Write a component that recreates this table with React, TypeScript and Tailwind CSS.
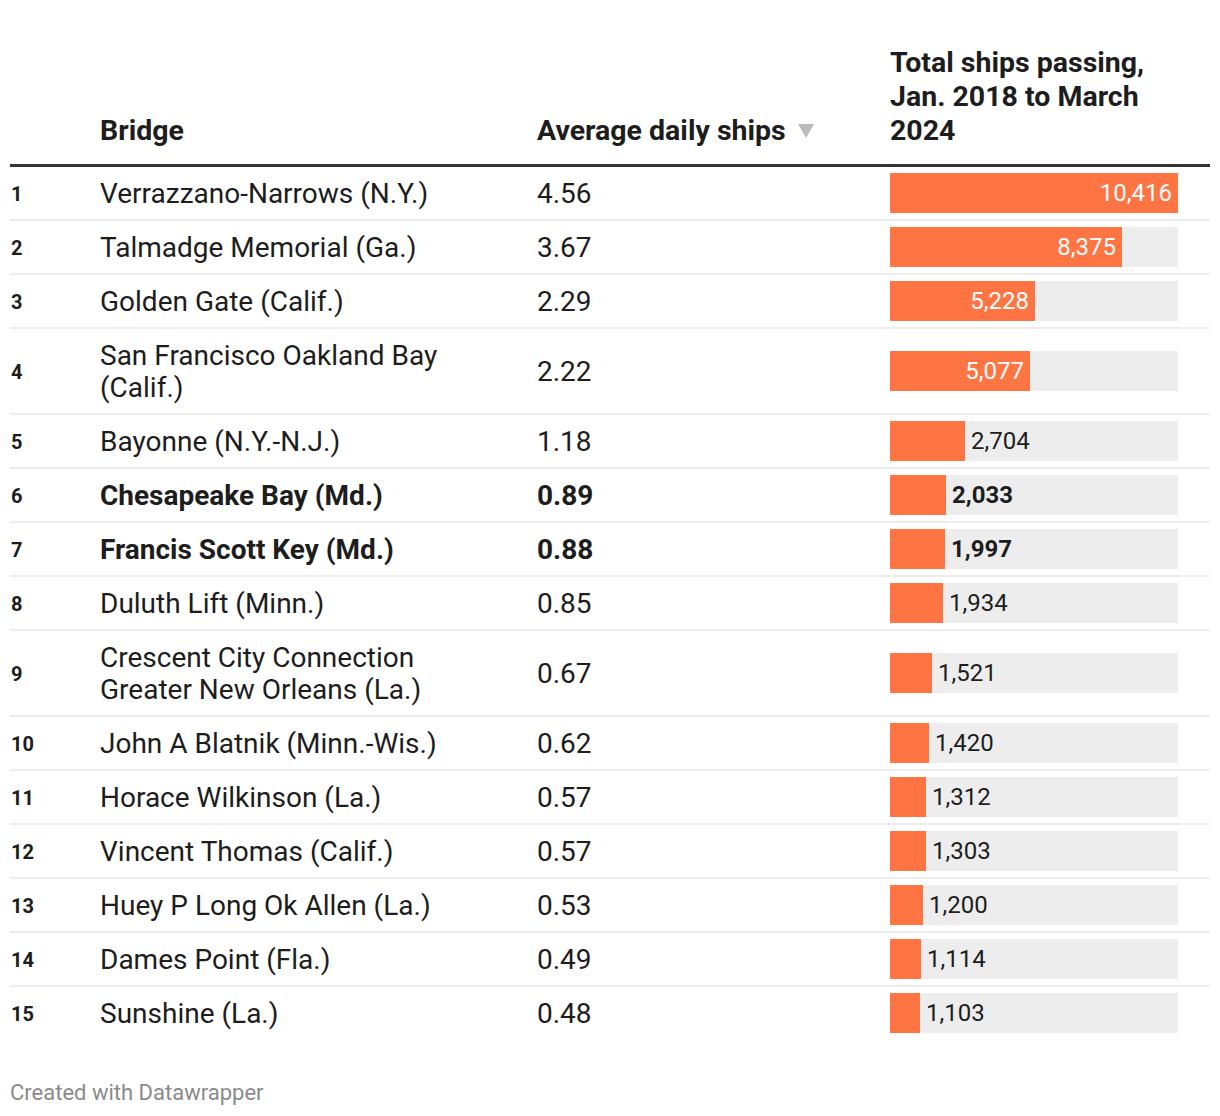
import React from "react";

// rows of the ship table
interface Row {
  rank: number;
  name: string;
  avg: string;
  total: number;
  bold?: boolean;
}

const rows: Row[] = [
  { rank: 1, name: "Verrazzano-Narrows (N.Y.)", avg: "4.56", total: 10416 },
  { rank: 2, name: "Talmadge Memorial (Ga.)", avg: "3.67", total: 8375 },
  { rank: 3, name: "Golden Gate (Calif.)", avg: "2.29", total: 5228 },
  { rank: 4, name: "San Francisco Oakland Bay (Calif.)", avg: "2.22", total: 5077 },
  { rank: 5, name: "Bayonne (N.Y.-N.J.)", avg: "1.18", total: 2704 },
  { rank: 6, name: "Chesapeake Bay (Md.)", avg: "0.89", total: 2033, bold: true },
  { rank: 7, name: "Francis Scott Key (Md.)", avg: "0.88", total: 1997, bold: true },
  { rank: 8, name: "Duluth Lift (Minn.)", avg: "0.85", total: 1934 },
  { rank: 9, name: "Crescent City Connection Greater New Orleans (La.)", avg: "0.67", total: 1521 },
  { rank: 10, name: "John A Blatnik (Minn.-Wis.)", avg: "0.62", total: 1420 },
  { rank: 11, name: "Horace Wilkinson (La.)", avg: "0.57", total: 1312 },
  { rank: 12, name: "Vincent Thomas (Calif.)", avg: "0.57", total: 1303 },
  { rank: 13, name: "Huey P Long Ok Allen (La.)", avg: "0.53", total: 1200 },
  { rank: 14, name: "Dames Point (Fla.)", avg: "0.49", total: 1114 },
  { rank: 15, name: "Sunshine (La.)", avg: "0.48", total: 1103 },
];

const MAX = 10416;
const BAR_W = 288;

const Bar = ({ value, bold }: { value: number; bold?: boolean }) => {
  const w = Math.round((value / MAX) * BAR_W);
  const inside = w > 110;
  const label = value.toLocaleString("en-US");
  return (
    <div className="flex h-[40px] w-[288px] bg-[#ededed]">
      <div
        className="flex h-full items-center justify-end bg-[#ff7443] pr-[6px]"
        style={{ width: w }}
      >
        {inside && <span className="text-[24px] text-white">{label}</span>}
      </div>
      {!inside && (
        <span className={`flex items-center pl-[6px] text-[24px] text-[#1d1d1d] ${bold ? "font-bold" : ""}`}>
          {label}
        </span>
      )}
    </div>
  );
};

export default function App() {
  return (
    <div className="min-h-[1116px] w-[1220px] bg-white px-[10px] pt-[46px] font-['Roboto',sans-serif] text-[#1d1d1d]">
      {/* header */}
      <div className="grid grid-cols-[90px_437px_353px_1fr] items-end border-b-[3px] border-[#333333] pb-[16px] text-[28.5px] font-bold leading-[34px]">
        <div></div>
        <div>Bridge</div>
        <div className="flex items-center">
          Average daily ships
          <svg className="ml-[12px]" width="16" height="14" viewBox="0 0 16 14">
            <path d="M0 0 H16 L8 14 Z" fill="#bbbbbb" />
          </svg>
        </div>
        <div className="w-[295px]">Total ships passing, Jan. 2018 to March 2024</div>
      </div>

      {/* rows */}
      {rows.map((r, i) => (
        <div
          key={r.rank}
          className={`grid grid-cols-[90px_437px_353px_1fr] items-center text-[28px] leading-[32px] ${
            i < rows.length - 1 ? "border-b-2 border-[#ececec]" : "border-b-2 border-transparent"
          } ${r.bold ? "font-bold" : ""}`}
        >
          <div className="pl-[1px] pt-[2px] text-[20px] font-bold">{r.rank}</div>
          <div className="pt-[11px] pb-[9px] pr-[60px]">{r.name}</div>
          <div className="pt-[11px] pb-[9px]">{r.avg}</div>
          <Bar value={r.total} bold={r.bold} />
        </div>
      ))}

      <div className="mt-[40px] text-[22px] leading-[24px] text-[#8a8a8a]">Created with Datawrapper</div>
    </div>
  );
}
